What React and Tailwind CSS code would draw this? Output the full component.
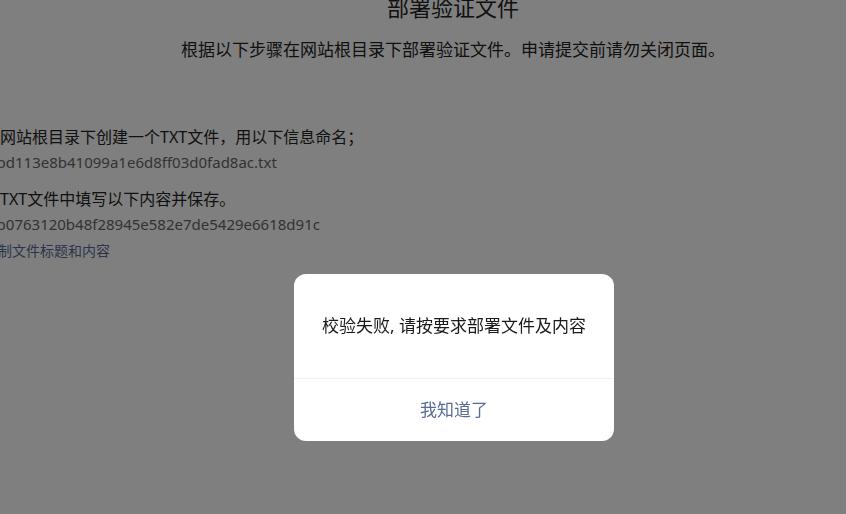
const FONT = { fontFamily: '"Noto Sans", "Noto Sans CJK SC", sans-serif' };

function Step({ text, value, link }) {
  return (
    <div className="flex flex-col">
      <p className="text-[16px] leading-[24px] text-[#222]">{text}</p>
      <p className="mt-[2px] ml-[4px] text-[15px] leading-[22px] text-[#666]">{value}</p>
      {link && (
        <a className="mt-[6px] text-[14px] leading-[20px] text-[#576b95]">{link}</a>
      )}
    </div>
  );
}

function Dialog() {
  return (
    <div className="fixed inset-0 z-10 bg-black/50">
      <div className="ml-[294px] mt-[274px] w-[320px] rounded-[12px] bg-white overflow-hidden">
        <div className="h-[104px] flex items-center justify-center px-6 text-[17px] text-[#1a1a1a]">
          校验失败, 请按要求部署文件及内容
        </div>
        <div className="h-px bg-[#f0f0f0]" />
        <button className="h-[62px] w-full flex items-center justify-center text-[17px] text-[#576b95]">
          我知道了
        </button>
      </div>
    </div>
  );
}

export default function App() {
  return (
    <div className="relative h-[514px] w-[846px] overflow-hidden bg-white" style={FONT}>
      <div className="w-[906px] mt-[-9px] flex flex-col items-center">
        <h1 className="text-[22px] leading-[32px] text-[#222]">部署验证文件</h1>
        <p className="mt-[15px] text-[17px] leading-[24px] text-[#222]">
          根据以下步骤在网站根目录下部署验证文件。申请提交前请勿关闭页面。
        </p>
      </div>
      <div className="ml-[-16px] mt-[63px] flex flex-col gap-[14px]">
        <Step text="在网站根目录下创建一个TXT文件，用以下信息命名；" value="5bd113e8b41099a1e6d8ff03d0fad8ac.txt" />
        <Step text="在TXT文件中填写以下内容并保存。" value="2b0763120b48f28945e582e7de5429e6618d91c" link="复制文件标题和内容" />
      </div>
      <Dialog />
    </div>
  );
}
